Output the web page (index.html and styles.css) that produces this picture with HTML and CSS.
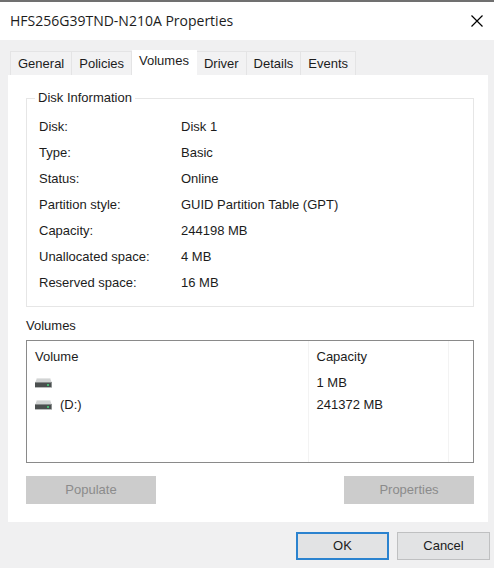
FILE: index.html
```html
<!DOCTYPE html>
<html lang="en">
<head>
<meta charset="utf-8">
<title>HFS256G39TND-N210A Properties</title>
<link rel="stylesheet" href="styles.css">
</head>
<body>
<svg class="defs" aria-hidden="true">
  <symbol id="drive" viewBox="0 0 17 10">
    <path d="M2 0H15L17 5H0Z" fill="#d2d4d4"/>
    <path d="M2 0H15L15.4 1H1.6Z" fill="#e4e5e5"/>
    <path d="M0 4H17V9H0Z" fill="#4b4f4f"/>
    <path d="M0 4H17V5H0Z" fill="#858989"/>
    <path d="M0 9H17V10H0Z" fill="#b9bbbb"/>
    <path d="M12 6H14V8H12Z" fill="#48b873"/>
    <path d="M16 4H17V9H16Z" fill="#8c9090"/>
  </symbol>
</svg>
<main class="dialog">
  <header class="titlebar">
    <h1 class="title">HFS256G39TND-N210A Properties</h1>
    <button class="close" type="button" aria-label="Close">
      <svg width="12" height="12" viewBox="0 0 12 12"><path d="M0.5 0.5L11.5 11.5M11.5 0.5L0.5 11.5" stroke="#000" stroke-width="1.2" fill="none"/></svg>
    </button>
  </header>
  <div class="body">
    <div class="tabs" role="tablist">
      <button class="tab" type="button" role="tab">General</button>
      <button class="tab" type="button" role="tab">Policies</button>
      <button class="tab active" type="button" role="tab" aria-selected="true">Volumes</button>
      <button class="tab" type="button" role="tab">Driver</button>
      <button class="tab" type="button" role="tab">Details</button>
      <button class="tab" type="button" role="tab">Events</button>
    </div>
    <section class="panel" role="tabpanel">
      <fieldset class="info">
        <legend>Disk Information</legend>
        <dl class="facts">
          <dt>Disk:</dt><dd>Disk 1</dd>
          <dt>Type:</dt><dd>Basic</dd>
          <dt>Status:</dt><dd>Online</dd>
          <dt>Partition style:</dt><dd>GUID Partition Table (GPT)</dd>
          <dt>Capacity:</dt><dd>244198 MB</dd>
          <dt>Unallocated space:</dt><dd>4 MB</dd>
          <dt>Reserved space:</dt><dd>16 MB</dd>
        </dl>
      </fieldset>
      <h2 class="label" id="volumes-label">Volumes</h2>
      <div class="list">
        <table class="volumes" aria-labelledby="volumes-label">
          <colgroup><col><col class="capacity"><col class="rest"></colgroup>
          <thead>
            <tr><th>Volume</th><th>Capacity</th><td></td></tr>
          </thead>
          <tbody>
            <tr><td><span class="volume"><svg class="drive"><use href="#drive"/></svg></span></td><td>1 MB</td><td></td></tr>
            <tr><td><span class="volume"><svg class="drive"><use href="#drive"/></svg>(D:)</span></td><td>241372 MB</td><td></td></tr>
            <tr class="filler"><td></td><td></td><td></td></tr>
          </tbody>
        </table>
      </div>
      <div class="actions">
        <button class="action" type="button" disabled>Populate</button>
        <button class="action" type="button" disabled>Properties</button>
      </div>
    </section>
    <footer class="footer">
      <button class="button primary" type="button">OK</button>
      <button class="button" type="button">Cancel</button>
    </footer>
  </div>
</main>
</body>
</html>
```
FILE: styles.css
```css
* {
  box-sizing: border-box;
}

body {
  margin: 0;
  background: #f0f0f1;
  color: #1c1c1c;
  font: 13px/20px "Liberation Sans", Arial, sans-serif;
}

button {
  margin: 0;
  padding: 0;
  font: inherit;
  color: inherit;
}

.defs {
  position: absolute;
  width: 0;
  height: 0;
}

.dialog {
  border-top: 2px solid #707070;
}

.titlebar {
  display: flex;
  align-items: center;
  justify-content: space-between;
  height: 38px;
  padding: 0 10px;
  background: #fff;
}

.title {
  margin: 0;
  font: 400 14px/20px "Open Sans", "Noto Sans", sans-serif;
}

.close {
  display: flex;
  align-items: center;
  justify-content: center;
  width: 14px;
  height: 24px;
  border: 0;
  background: none;
}

.body {
  padding: 10px 4px 8px 8px;
}

.tabs {
  display: flex;
  align-items: flex-end;
  padding-left: 2px;
}

.tab {
  height: 24px;
  padding: 0 7px;
  border: 1px solid #e4e4e5;
  border-width: 1px 1px 0 0;
  background: #f2f2f3;
}

.tab:first-child {
  border-left-width: 1px;
}

.tab.active {
  height: 25px;
  padding: 0 7px 4px;
  border-color: #fff;
  background: #fff;
}

.panel {
  margin-right: 2px;
  padding: 13px 14px 18px 18px;
  background: #fff;
}

.info {
  min-width: 0;
  margin: 0;
  padding: 6px 12px 10px;
  border: 1px solid #e6e6e6;
}

.info legend {
  margin-left: -4px;
  padding: 0 3px;
}

.facts {
  display: grid;
  grid-template-columns: 142px 1fr;
  margin: 0;
  line-height: 26px;
}

.facts dd {
  margin: 0;
}

.label {
  margin: 9px 0 4px;
  font: inherit;
}

.list {
  border: 1px solid #8a8a8a;
}

.volumes {
  width: 100%;
  border-collapse: collapse;
  table-layout: fixed;
}

.volumes th,
.volumes td {
  height: 22px;
  padding: 0 8px;
  border-right: 1px solid #f3f3f3;
  font-weight: 400;
  text-align: left;
}

.volumes th {
  height: 31px;
}

.volumes td:last-child {
  border-right: 0;
}

.volumes .filler td {
  height: 46px;
}

.capacity {
  width: 140px;
}

.rest {
  width: 25px;
}

.volume {
  display: flex;
  align-items: center;
  gap: 8px;
}

.drive {
  width: 17px;
  height: 10px;
}

.actions {
  display: flex;
  justify-content: space-between;
  padding-top: 13px;
}

.action {
  width: 130px;
  height: 28px;
  border: 0;
  background: #cccccc;
  color: #8b8b8b;
}

.footer {
  display: flex;
  justify-content: flex-end;
  gap: 8px;
  padding-top: 10px;
}

.button {
  width: 93px;
  height: 28px;
  border: 1px solid #bfc0c1;
  background: #e2e3e4;
}

.button.primary {
  border: 2px solid #2b83cf;
}
```
